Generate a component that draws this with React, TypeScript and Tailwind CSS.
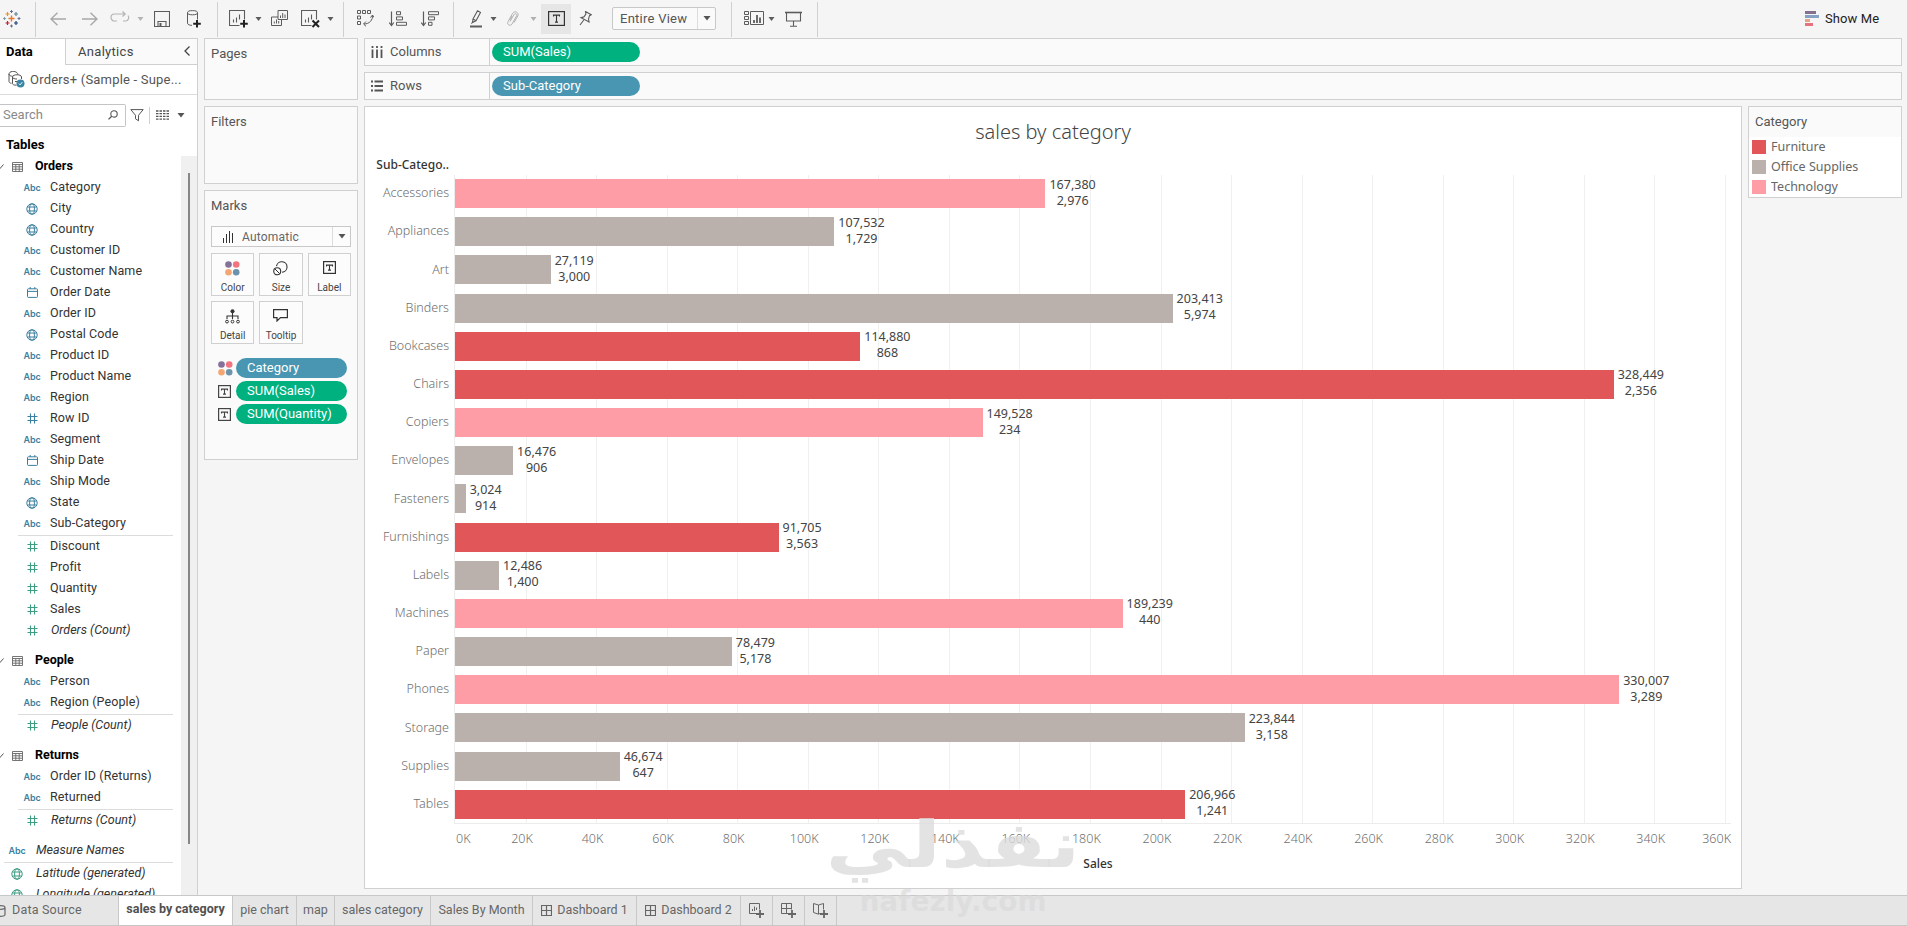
import type { ReactNode } from 'react';

type IconKind = 'abc' | 'globe' | 'date' | 'num';
type Field = { name: string; icon: IconKind; measure?: boolean; italic?: boolean };
type Table = { title: string; dimensions: Field[]; measures: Field[] };

// Data pane
const tables: Table[] = [
  {
    title: 'Orders',
    dimensions: [
      { name: 'Category', icon: 'abc' },
      { name: 'City', icon: 'globe' },
      { name: 'Country', icon: 'globe' },
      { name: 'Customer ID', icon: 'abc' },
      { name: 'Customer Name', icon: 'abc' },
      { name: 'Order Date', icon: 'date' },
      { name: 'Order ID', icon: 'abc' },
      { name: 'Postal Code', icon: 'globe' },
      { name: 'Product ID', icon: 'abc' },
      { name: 'Product Name', icon: 'abc' },
      { name: 'Region', icon: 'abc' },
      { name: 'Row ID', icon: 'num' },
      { name: 'Segment', icon: 'abc' },
      { name: 'Ship Date', icon: 'date' },
      { name: 'Ship Mode', icon: 'abc' },
      { name: 'State', icon: 'globe' },
      { name: 'Sub-Category', icon: 'abc' },
    ],
    measures: [
      { name: 'Discount', icon: 'num', measure: true },
      { name: 'Profit', icon: 'num', measure: true },
      { name: 'Quantity', icon: 'num', measure: true },
      { name: 'Sales', icon: 'num', measure: true },
      { name: 'Orders (Count)', icon: 'num', measure: true, italic: true },
    ],
  },
  {
    title: 'People',
    dimensions: [
      { name: 'Person', icon: 'abc' },
      { name: 'Region (People)', icon: 'abc' },
    ],
    measures: [{ name: 'People (Count)', icon: 'num', measure: true, italic: true }],
  },
  {
    title: 'Returns',
    dimensions: [
      { name: 'Order ID (Returns)', icon: 'abc' },
      { name: 'Returned', icon: 'abc' },
    ],
    measures: [{ name: 'Returns (Count)', icon: 'num', measure: true, italic: true }],
  },
];

// Chart data
const colors = {
  furniture: 'bg-[#e15759]',
  office: 'bg-[#bab0ac]',
  technology: 'bg-[#ff9da7]',
};

const AXIS_MAX = 361700;

const rows: { name: string; sales: number; quantity: number; group: keyof typeof colors }[] = [
  { name: 'Accessories', sales: 167380, quantity: 2976, group: 'technology' },
  { name: 'Appliances', sales: 107532, quantity: 1729, group: 'office' },
  { name: 'Art', sales: 27119, quantity: 3000, group: 'office' },
  { name: 'Binders', sales: 203413, quantity: 5974, group: 'office' },
  { name: 'Bookcases', sales: 114880, quantity: 868, group: 'furniture' },
  { name: 'Chairs', sales: 328449, quantity: 2356, group: 'furniture' },
  { name: 'Copiers', sales: 149528, quantity: 234, group: 'technology' },
  { name: 'Envelopes', sales: 16476, quantity: 906, group: 'office' },
  { name: 'Fasteners', sales: 3024, quantity: 914, group: 'office' },
  { name: 'Furnishings', sales: 91705, quantity: 3563, group: 'furniture' },
  { name: 'Labels', sales: 12486, quantity: 1400, group: 'office' },
  { name: 'Machines', sales: 189239, quantity: 440, group: 'technology' },
  { name: 'Paper', sales: 78479, quantity: 5178, group: 'office' },
  { name: 'Phones', sales: 330007, quantity: 3289, group: 'technology' },
  { name: 'Storage', sales: 223844, quantity: 3158, group: 'office' },
  { name: 'Supplies', sales: 46674, quantity: 647, group: 'office' },
  { name: 'Tables', sales: 206966, quantity: 1241, group: 'furniture' },
];

const ticks = Array.from({ length: 19 }, (_, i) => i * 20);

const legend = [
  { label: 'Furniture', color: colors.furniture },
  { label: 'Office Supplies', color: colors.office },
  { label: 'Technology', color: colors.technology },
];

// Icons
const Svg = ({
  w,
  h,
  className = '',
  children,
}: {
  w: number;
  h: number;
  className?: string;
  children: ReactNode;
}) => (
  <svg
    width={w}
    height={h}
    viewBox={`0 0 ${w} ${h}`}
    fill="none"
    stroke="currentColor"
    className={`shrink-0 ${className}`}
  >
    {children}
  </svg>
);

const Caret = ({ className = '' }: { className?: string }) => (
  <Svg w={7} h={4} className={className}>
    <path d="M0.5 0h6L3.5 4z" fill="currentColor" stroke="none" />
  </Svg>
);

const BigCaret = () => (
  <Svg w={8} h={5} className="text-[#555]">
    <path d="M0.5 0h7L4 4.5z" fill="currentColor" stroke="none" />
  </Svg>
);

const Divider = ({ className }: { className: string }) => (
  <div className={`mt-px h-[35px] w-px shrink-0 bg-[#d0d0d0] ${className}`} />
);

const TableauLogo = () => (
  <Svg w={18} h={18} className="ml-[3px]">
    <path d="M8.5 5.5v6M5.5 8.5h6" stroke="#e8762c" strokeWidth="1.4" />
    <path d="M4.5 2v4M2.5 4h4" stroke="#eb9129" strokeWidth="1.2" />
    <path d="M13 2v4M11 4h4" stroke="#59879b" strokeWidth="1.2" />
    <path d="M4.5 11v4M2.5 13h4" stroke="#c72035" strokeWidth="1.2" />
    <path d="M13 11v4M11 13h4" stroke="#1f447e" strokeWidth="1.2" />
    <path d="M8.5 0v3M7 1.5h3" stroke="#5b6591" strokeWidth="0.9" />
    <path d="M8.5 14.5v3M7 16h3" stroke="#5b6591" strokeWidth="0.9" />
    <path d="M1.5 7v3M0 8.5h3" stroke="#7199a6" strokeWidth="0.9" />
    <path d="M16 7v3M14.5 8.5h3" stroke="#5b6591" strokeWidth="0.9" />
  </Svg>
);

const LabelIcon = ({ w, h, className = '' }: { w: number; h: number; className?: string }) => (
  <Svg w={w} h={h} className={className}>
    <rect x="0.6" y="0.6" width={w - 1.2} height={h - 1.2} strokeWidth="1.2" />
    <path
      d={`M${w / 2 - 3} 5.6V4.1h6v1.5M${w / 2} 4.1v${h - 8}M${w / 2 - 1.5} ${h - 3.9}h3`}
      strokeWidth="1.1"
    />
  </Svg>
);

const ColorDots = () => (
  <Svg w={15} h={15}>
    <g stroke="none">
      <circle cx="3.5" cy="3.5" r="3.3" fill="#85709a" />
      <circle cx="11.2" cy="3.5" r="3.3" fill="#f2747e" />
      <circle cx="3.5" cy="11.3" r="3.3" fill="#f3a671" />
      <circle cx="11.2" cy="11.3" r="3.3" fill="#6c93ab" />
    </g>
  </Svg>
);

const FieldIcon = ({ kind, measure }: { kind: IconKind; measure?: boolean }) => {
  const tint = measure ? 'text-[#3d9c82]' : 'text-[#3b7f9f]';
  if (kind === 'abc') {
    return (
      <span className={`pt-px font-['Inter'] text-[9px] font-semibold tracking-[-0.1px] ${tint}`}>
        Abc
      </span>
    );
  }
  if (kind === 'globe') {
    return (
      <Svg w={12} h={12} className={tint}>
        <circle cx="6" cy="6" r="5.2" />
        <ellipse cx="6" cy="6" rx="2.4" ry="5.2" />
        <path d="M1.4 4h9.2M1.4 8h9.2" />
      </Svg>
    );
  }
  if (kind === 'date') {
    return (
      <Svg w={11} h={11} className={tint}>
        <rect x="0.5" y="1.8" width="10" height="8.6" rx="0.8" />
        <path d="M0.5 4.4h10M3.2 0v2M7.8 0v2" />
      </Svg>
    );
  }
  return (
    <Svg w={11} h={11} className={tint}>
      <path d="M3.5 0.5v10M7.5 0.5v10M0.5 3.5h10M0.5 7.5h10" strokeWidth="1.1" />
    </Svg>
  );
};

const TableIcon = () => (
  <Svg w={11} h={10} className="text-[#666]">
    <path d="M0.5 0.5h10v9h-10zM0.5 2.5h10M0.5 4.8h10M0.5 7.2h10M3.8 2.5v7M7.2 2.5v7" strokeWidth="0.9" />
  </Svg>
);

// Toolbar
const Toolbar = () => (
  <header className="flex h-[38px] shrink-0 items-center bg-[#f5f5f5] pb-px text-[#5c5c5c]">
    <TableauLogo />
    <Divider className="ml-[14px]" />
    <Svg w={16} h={14} className="ml-[14px] text-[#a8a8a8]">
      <path d="M16 7H1M7.5 0.7L1 7l6.5 6.3" strokeWidth="1.4" />
    </Svg>
    <Svg w={16} h={14} className="ml-4 text-[#a8a8a8]">
      <path d="M0 7h15M8.5 0.7L15 7l-6.500 6.300" strokeWidth="1.4" />
    </Svg>
    <Svg w={20} h={12} className="ml-3 -mt-1 text-[#b4b4b4]">
      <path d="M7 10H4.500a3.500 3.500 0 010-7H15M12.500 0.500L15.200 3l-2.700 2.500M13 10h2.500a3.400 3.400 0 002.500-5.500" strokeWidth="1.2" />
    </Svg>
    <Caret className="ml-[7px] text-[#b4b4b4]" />
    <Svg w={16} h={16} className="ml-[10px]">
      <path d="M0.500 0.500h15v15h-15zM4 15.500v-5h8v5" strokeWidth="1.100" />
      <path d="M5.500 12h2v3.500h-2z" fill="currentColor" stroke="none" />
    </Svg>
    <Svg w={15} h={18} className="ml-[17px]">
      <ellipse cx="5.500" cy="2.700" rx="5" ry="2.100" />
      <path d="M0.500 2.700v10.500c0 1.300 2 2.100 4.500 2.200M10.500 2.700v6.800" />
      <path d="M10 10v7.500M6.200 13.800h7.600" stroke="#222" strokeWidth="2" />
    </Svg>
    <Divider className="ml-[15px]" />
    <Svg w={19} h={18} className="ml-[11px]">
      <path d="M10.500 15.500H0.500v-15h15v9M4.500 12.500v-3M7.500 12.500v-5M10.500 9.500v-5" strokeWidth="1.100" />
      <path d="M15 10v7.500M11.200 13.800h7.600" stroke="#222" strokeWidth="2" />
    </Svg>
    <Caret className="ml-[7px]" />
    <Svg w={17} h={17} className="ml-[9px]">
      <path d="M7 0.500h9.500v9H7zM9.500 8V5.500M11.700 8V3M14 8V4.500" />
      <path d="M7 7H0.500v8.500h10V9.500M3.300 13.500v-2M5.500 13.500v-4M7.700 13.500v-2.500" />
    </Svg>
    <Svg w={19} h={18} className="ml-[13px]">
      <path d="M10.500 15.500H0.500v-15h15v9M4.500 12.500v-3M7.500 12.500v-5M10.500 9.500v-5" strokeWidth="1.100" />
      <path d="M11.500 10.500l6.500 6.500M18 10.500l-6.500 6.500" stroke="#222" strokeWidth="2" />
    </Svg>
    <Caret className="ml-[7px]" />
    <Divider className="ml-[9px]" />
    <Svg w={17} h={17} className="ml-[13px]">
      <path d="M0.500 0.500h3v3h-3zM5.500 0.500h3v3h-3zM10.500 0.500h3v3h-3zM0.500 6h3v3h-3zM0.500 11.500h3v3h-3zM15.500 5c0.500 5-3 9-8.500 9M13.500 7.500L15.500 5l1.500 2.500M9 11.500L6.500 14l2.500 2.300" />
    </Svg>
    <Svg w={18} h={16} className="ml-[15px]">
      <path d="M2.500 0.500v13M0.200 11.500l2.300 3 2.300-3" strokeWidth="1.200" />
      <path d="M7.500 0.700h4v3h-4zM7.500 5.900h6v3h-6zM7.500 11.300h10v3h-10z" />
    </Svg>
    <Svg w={18} h={16} className="ml-[14px]">
      <path d="M2.500 0.500v13M0.200 11.500l2.300 3 2.300-3" strokeWidth="1.200" />
      <path d="M7.500 0.700h10v3h-10zM7.500 5.900h6v3h-6zM7.500 11.300h3.500v3H7.500z" />
    </Svg>
    <Divider className="ml-[14px]" />
    <Svg w={12} h={18} className="ml-4">
      <path d="M3 9L7.500 0.800l3 1.700L6 10.800l-3.500 1.700zM3 9l3 1.800M1.500 13.800l1-1.500" strokeWidth="1.100" />
      <path d="M0 16.500h12" strokeWidth="2" />
    </Svg>
    <Caret className="ml-2" />
    <Svg w={13} h={16} className="ml-[9px] text-[#b0b0b0]">
      <path d="M4 10.500L8 3.500c1.200-1.800 3.500-0.500 2.500 1.500l-4.500 8c-1.500 2.500-5.500 0.800-4-2.200L6.500 2.500C8.500-1 13.500 1.500 11.800 5L8 11.500M6 5L3.800 9" />
    </Svg>
    <Caret className="ml-[11px] text-[#b0b0b0]" />
    <div className="ml-1 flex h-[30px] w-[30px] items-center justify-center bg-[#e6e6e6] text-[#333]">
      <LabelIcon w={17} h={15} />
    </div>
    <Svg w={13} h={15} className="ml-2">
      <path d="M6.500 0.600l5.700 3.200-1.700 0.900-1 3.300 0.600 3L2 6.700l2.900-0.800 2-2.700zM4.800 9L1 14" strokeWidth="1.100" />
    </Svg>
    <div className="ml-5 flex h-[23px] w-[104px] items-center rounded-xs border border-[#c8c8c8] bg-[#fafafa] text-[13px] text-[#555]">
      <span className="w-[84px] pl-[7px] tracking-[0.25px]">Entire View</span>
      <span className="flex h-full flex-1 items-center justify-center border-l border-[#dcdcdc]">
        <BigCaret />
      </span>
    </div>
    <Divider className="ml-[15px]" />
    <Svg w={20} h={15} className="ml-3">
      <path d="M0.500 0.500h4v3h-4zM0.500 5.500h4v3h-4zM0.500 10.500h4v3h-4zM6.500 0.500h13v13h-13z" />
      <path d="M10 12V9M13 12V4M16 12V6.500" strokeWidth="1.800" />
    </Svg>
    <Caret className="ml-1" />
    <Svg w={17} h={16} className="ml-[10px]">
      <path d="M0 1.500h17" strokeWidth="1.600" />
      <path d="M1.500 1.500v8.500h14V1.500M8.500 10v5M5 15.300h7" strokeWidth="1.100" />
    </Svg>
    <Divider className="ml-[15px]" />
    <Svg w={14} h={15} className="mr-[6px] ml-auto">
      <g stroke="none">
        <path d="M0 0h11v3H0z" fill="#84708f" />
        <path d="M0 4h14v3H0z" fill="#86a2c4" />
        <path d="M0 8h5v3H0z" fill="#e3a687" />
        <path d="M0 12h8v3H0z" fill="#e8717e" />
      </g>
    </Svg>
    <span className="w-[82px] text-[13px] tracking-[0.1px] text-[#222]">Show Me</span>
  </header>
);

// Left data pane
const FieldRow = ({ field, root = false }: { field: Field; root?: boolean }) => (
  <div className={`flex h-[21px] shrink-0 items-center ${root ? 'pl-1' : 'pl-[19px]'}`}>
    <span className="flex w-[26px] shrink-0 justify-center">
      <FieldIcon kind={field.icon} measure={field.measure} />
    </span>
    <span
      className={`whitespace-nowrap text-[#333] ${
        field.italic ? 'pl-[6px] italic' : 'pl-[5px] tracking-[0.1px]'
      }`}
    >
      {field.name}
    </span>
  </div>
);

const DataPane = () => (
  <aside className="flex w-[198px] shrink-0 flex-col border-r border-[#d0d0d0] bg-white">
    <div className="flex h-[27px] shrink-0 text-[13px]">
      <div className="w-[65px] border-t border-[#d0d0d0] pt-[3px] pl-[6px] font-bold text-black">
        Data
      </div>
      <div className="flex flex-1 justify-between border border-r-0 border-[#d0d0d0] bg-[#fafafa] pt-[3px] pr-[7px] pl-3 text-[#444]">
        <span className="tracking-[0.3px]">Analytics</span>
        <Svg w={6} h={10} className="mt-1">
          <path d="M5.500 0.500L1 5l4.500 4.500" strokeWidth="1.300" />
        </Svg>
      </div>
    </div>

    <div className="flex h-[30px] shrink-0 items-center border-b border-[#dcdcdc] pl-2 text-[#555]">
      <Svg w={17} h={17}>
        <path d="M1 3v7.500c0 1 1 1.600 2.500 1.800M10 3.500C9.500-0.500 1-0.500 1 3c0 1.500 2 2.200 3.500 2.200M4.500 6v6.500c0 1 1.500 1.700 4 1.700M4.500 6c0-3 9-3 9 0v2M4.500 6c0 1.500 2 2 4.500 2M7 10.500h2.500" />
        <circle cx="12.500" cy="12.500" r="4" fill="#3b86a5" stroke="none" />
        <path d="M10.800 12.500l1.300 1.400 2.200-2.700" stroke="#fff" strokeWidth="0.900" />
      </Svg>
      <span className="pl-[5px] text-[13px] tracking-[0.2px]">Orders+ (Sample - Supe...</span>
    </div>

    <div className="flex h-[40px] shrink-0 items-center">
      <div className="flex h-[23px] w-[126px] items-center justify-between rounded-r-xs border border-l-0 border-[#c4c4c4] pr-[7px] pl-[3px] text-[13px] text-[#8a8a8a]">
        Search
        <Svg w={10} h={10} className="text-[#555]">
          <circle cx="6" cy="3.900" r="3.200" strokeWidth="1.100" />
          <path d="M3.700 6.200L0.500 9.400" strokeWidth="1.300" />
        </Svg>
      </div>
      <Svg w={14} h={13} className="ml-1 text-[#555]">
        <path d="M0.800 0.600h12.400L8.500 6.300v5.500l-3-2V6.300z" />
      </Svg>
      <div className="ml-[5px] h-[17px] w-px bg-[#d0d0d0]" />
      <Svg w={13} h={10} className="ml-[6px] text-[#555]">
        <path d="M0 1h13M0 3.700h13M0 6.400h13M0 9.100h13" strokeWidth="1.300" strokeDasharray="2.500 1" />
      </Svg>
      <div className="ml-2">
        <BigCaret />
      </div>
    </div>

    <div className="h-[21px] shrink-0 pl-[6px] text-[13px] font-bold text-black">Tables</div>

    <div className="flex min-h-0 flex-1">
      <div className="flex w-[181px] flex-col overflow-hidden text-[12.500px]">
        {tables.map((table) => (
          <div key={table.title} className="mb-[9px] flex shrink-0 flex-col">
            <div className="flex h-[21px] items-center text-[12.500px] font-bold text-black">
              <Svg w={4} h={5} className="mr-2 text-[#555]">
                <path d="M-3 1.500L0 4.500l3.500-4" />
              </Svg>
              <TableIcon />
              <span className="pl-3">{table.title}</span>
            </div>
            {table.dimensions.map((field) => (
              <FieldRow key={field.name} field={field} />
            ))}
            <div className="ml-[18px] h-[2px] w-[155px] border-b border-[#dcdcdc]" />
            {table.measures.map((field) => (
              <FieldRow key={field.name} field={field} />
            ))}
          </div>
        ))}
        <FieldRow root field={{ name: 'Measure Names', icon: 'abc', italic: true }} />
        <div className="ml-1 h-[2px] w-[169px] shrink-0 border-b border-[#dcdcdc]" />
        <FieldRow
          root
          field={{ name: 'Latitude (generated)', icon: 'globe', measure: true, italic: true }}
        />
        <FieldRow
          root
          field={{ name: 'Longitude (generated)', icon: 'globe', measure: true, italic: true }}
        />
      </div>
      <div className="flex-1 bg-[#f0f0f0] pt-[17px] pl-[7px]">
        <div className="h-[671px] w-[2px] bg-[#878787]" />
      </div>
    </div>
  </aside>
);

// Shelves and marks card
const Pill = ({ blue = false, className, children }: { blue?: boolean; className: string; children: ReactNode }) => (
  <div
    className={`flex h-5 items-center rounded-full pl-[11px] text-[13px] whitespace-nowrap text-white ${
      blue ? 'bg-[#4996b2]' : 'bg-[#00b180]'
    } ${className}`}
  >
    {children}
  </div>
);

const MarkButton = ({ label, children }: { label: string; children: ReactNode }) => (
  <div className="flex h-[43px] flex-col items-center justify-between border border-[#d0d0d0] bg-[#fcfcfc] pt-[7px] pb-px text-[#333]">
    {children}
    <span className="text-[10px] leading-[13px] whitespace-nowrap text-[#444]">{label}</span>
  </div>
);

const Cards = () => (
  <div className="ml-[6px] flex w-[154px] shrink-0 flex-col gap-[6px] text-[13px] text-[#555]">
    <section className="h-[62px] border border-[#d0d0d0] bg-[#fafafa] pt-[5px] pl-[6px]">Pages</section>
    <section className="h-[78px] border border-[#d0d0d0] bg-[#fafafa] pt-[5px] pl-[6px]">
      Filters
    </section>
    <section className="h-[270px] border border-[#d0d0d0] bg-[#fafafa] px-[6px] pt-[5px]">
      <h2 className="h-[30px]">Marks</h2>
      <div className="flex h-[21px] items-center border border-[#c8c8c8] bg-[#fcfcfc] text-[12px]">
        <Svg w={11} h={12} className="ml-[11px] text-[#333]">
          <path d="M0.500 12V7M3.500 12V3M6.500 12V0M9.500 12V2" />
        </Svg>
        <span className="flex-1 pl-2 tracking-[0.200px] text-[#666]">Automatic</span>
        <span className="flex h-full w-[18px] items-center justify-center border-l border-[#dcdcdc]">
          <BigCaret />
        </span>
      </div>
      <div className="mt-[6px] grid grid-cols-3 gap-x-[5px] gap-y-[5px]">
        <MarkButton label="Color">
          <ColorDots />
        </MarkButton>
        <MarkButton label="Size">
          <Svg w={15} h={15}>
            <path d="M3.500 5.200A5.300 5.300 0 119 11.300" strokeWidth="1.100" />
            <circle cx="4.200" cy="10.300" r="3.500" strokeWidth="1.100" />
            <path d="M2 8l4.500 4.500" />
          </Svg>
        </MarkButton>
        <MarkButton label="Label">
          <LabelIcon w={13} h={13} />
        </MarkButton>
        <MarkButton label="Detail">
          <Svg w={15} h={15}>
            <circle cx="7.500" cy="2.200" r="2" fill="currentColor" stroke="none" />
            <path d="M7.500 3v7M2 10V7h11v3" strokeWidth="1.100" />
            <circle cx="2" cy="12.600" r="1.400" />
            <circle cx="7.500" cy="12.600" r="1.400" />
            <circle cx="13" cy="12.600" r="1.400" />
          </Svg>
        </MarkButton>
        <MarkButton label="Tooltip">
          <Svg w={15} h={13}>
            <path d="M0.600 0.600h13.800v8H7.500L4 12V8.600H0.600z" strokeWidth="1.200" />
          </Svg>
        </MarkButton>
      </div>
      <div className="mt-[14px] flex flex-col gap-[3px] pl-[7px] text-[#444]">
        <div className="flex items-center gap-[3px]">
          <ColorDots />
          <Pill blue className="w-[111px]">Category</Pill>
        </div>
        <div className="flex items-center gap-[5px]">
          <LabelIcon w={13} h={13} />
          <Pill className="w-[111px]">SUM(Sales)</Pill>
        </div>
        <div className="flex items-center gap-[5px]">
          <LabelIcon w={13} h={13} />
          <Pill className="w-[111px]">SUM(Quantity)</Pill>
        </div>
      </div>
    </section>
  </div>
);

const Shelf = ({ icon, label, children }: { icon: ReactNode; label: string; children: ReactNode }) => (
  <div className="flex h-7 shrink-0 items-center border border-[#d0d0d0] bg-[#fafafa] text-[13px] text-[#555]">
    <div className="flex h-full w-[125px] items-center gap-[7px] border-r border-[#d0d0d0] pl-[6px]">
      {icon}
      {label}
    </div>
    <div className="pl-[2px]">{children}</div>
  </div>
);

// Bar chart
const Chart = () => (
  <section className="flex w-[1378px] shrink-0 flex-col border border-[#d0d0d0] bg-white font-['Noto_Sans',sans-serif] text-[12.500px]">
    <h1 className="h-[50px] pt-[11px] text-center text-[20px] leading-7 font-light text-[#444]">
      sales by category
    </h1>
    <div className="h-[17.500px] w-[84px] text-right text-[12px] leading-4 font-medium text-[#333]">
      Sub-Catego..
    </div>

    <div className="relative h-[649px]">
      <div className="absolute inset-y-0 left-[89px] w-[1277px] border-b border-l border-[#ececec]">
        {ticks.slice(1).map((tick) => (
          <span
            key={tick}
            className="absolute inset-y-0 w-px bg-[#f0f0f0]"
            style={{ left: `${((tick * 1000) / AXIS_MAX) * 100}%` }}
          />
        ))}
      </div>
      <div className="relative flex h-full flex-col">
        {rows.map((row) => (
          <div key={row.name} className="flex flex-1 items-center">
            <span className="w-[90px] pr-[6px] text-right font-light text-[#6e6e6e]">{row.name}</span>
            <div className="flex w-[1276px] items-center">
              <div
                className={`h-[29px] shrink-0 ${colors[row.group]}`}
                style={{ width: `${(row.sales / AXIS_MAX) * 100}%` }}
              />
              <div className="-mt-[2px] pl-1 text-center leading-4 text-[#444]">
                {row.sales.toLocaleString('en-US')}
                <br />
                {row.quantity.toLocaleString('en-US')}
              </div>
            </div>
          </div>
        ))}
      </div>
    </div>

    {/* axis */}
    <div className="flex h-8 items-center justify-between pr-[10px] pl-[91px] font-light text-[#6e6e6e]">
      <span>0K</span>
      <div className="flex">
        {ticks.slice(1, -1).map((tick) => (
          <span key={tick} className="w-[70.550px] text-center">
            {tick}K
          </span>
        ))}
      </div>
      <span>360K</span>
    </div>
    <div className="pl-[90px] text-center text-[12px] leading-4 font-medium text-[#333]">Sales</div>
  </section>
);

const Legend = () => (
  <section className="h-[92px] w-[154px] border border-[#d0d0d0] bg-white text-[#555]">
    <h2 className="h-[30px] bg-[#fafafa] pt-[5px] pl-[6px] text-[13px]">Category</h2>
    <ul className="pl-[3px] font-['Noto_Sans',sans-serif] text-[12.500px]">
      {legend.map((item) => (
        <li key={item.label} className="flex h-5 items-center gap-[5px] leading-5 text-[#666]">
          <span className={`h-[14px] w-[14px] ${item.color}`} />
          {item.label}
        </li>
      ))}
    </ul>
  </section>
);

// Sheet tabs
const DashboardIcon = () => (
  <Svg w={11} h={11} className="mr-[5px]">
    <path d="M0.500 0.500h10v10h-10zM5.500 0.500v10M0.500 5.500h10" strokeWidth="1.200" />
  </Svg>
);

const tabs = [
  { label: 'pie chart', width: 'w-[64px]' },
  { label: 'map', width: 'w-[38px]' },
  { label: 'sales category', width: 'w-[96px]' },
  { label: 'Sales By Month', width: 'w-[102px]' },
  { label: 'Dashboard 1', width: 'w-[104px]', dashboard: true },
  { label: 'Dashboard 2', width: 'w-[104px]', dashboard: true },
];

const SheetTabs = () => (
  <footer className="flex h-[31px] shrink-0 border-y border-[#c8c8c8] bg-[#e6e6e6] text-[12.500px] whitespace-nowrap text-[#666]">
    <div className="flex w-[119px] items-center border-r border-[#c8c8c8]">
      <Svg w={6} h={12} className="mr-[6px]">
        <path d="M-5 2.500c0-2.500 10-2.500 10 0v7c0 2.500-10 2.500-10 0M5 2.500c0 2-5 2-6 1.500" strokeWidth="1.200" />
      </Svg>
      <span className="tracking-[0.200px]">Data Source</span>
    </div>
    <div className="flex w-[114px] items-center justify-center border-r border-[#c8c8c8] bg-white pb-[2px] font-bold text-[#505050]">
      sales by category
    </div>
    {tabs.map((tab) => (
      <div
        key={tab.label}
        className={`flex items-center justify-center border-r border-[#c8c8c8] ${tab.width}`}
      >
        {tab.dashboard && <DashboardIcon />}
        {tab.label}
      </div>
    ))}
    <div className="flex w-8 items-center justify-center border-r border-[#c8c8c8]">
      <Svg w={15} h={15}>
        <path d="M7 10.500H0.500v-10h10v6M3.500 8V6M5.500 8V3.500M7.500 7V4.500" />
        <path d="M11 7v8M7 11h8" strokeWidth="1.800" />
      </Svg>
    </div>
    <div className="flex w-8 items-center justify-center border-r border-[#c8c8c8]">
      <Svg w={15} h={15}>
        <path d="M7 10.500H0.500v-10h10v6M5.500 0.500v10M0.500 5.500h10" />
        <path d="M11 7v8M7 11h8" strokeWidth="1.800" />
      </Svg>
    </div>
    <div className="flex w-8 items-center justify-center border-r border-[#c8c8c8]">
      <Svg w={15} h={15}>
        <path d="M5.500 2L0.500 0.500v9l5 1.700 1.500-0.700M5.500 2v9M5.500 2l5-1.500v6" />
        <path d="M11 7v8M7 11h8" strokeWidth="1.800" />
      </Svg>
    </div>
  </footer>
);

const Watermark = () => (
  <div className="pointer-events-none absolute top-[806px] left-[846px] flex w-[214px] flex-col items-center font-['DejaVu_Sans',sans-serif] font-bold whitespace-nowrap text-[#dcdcdc]/80">
    <span dir="rtl" className="h-[78px] origin-center scale-x-[1.300] text-[64px] leading-[78px]">
      نفذلي
    </span>
    <span className="text-[28px] leading-[36px] text-[#d8d8d8]/60">nafezly.com</span>
  </div>
);

export default function App() {
  return (
    <div className="relative flex h-[926px] w-[1907px] flex-col overflow-hidden bg-[#f5f5f5] font-['Roboto',sans-serif]">
      <Toolbar />
      <main className="flex min-h-0 flex-1">
        <DataPane />
        <Cards />
        <div className="mr-[5px] ml-[6px] flex flex-1 flex-col gap-[6px] pb-[6px]">
          <Shelf
            label="Columns"
            icon={
              <Svg w={12} h={12}>
                <path d="M1.500 0v2M1.500 3.500V12M6 0v2M6 3.500V12M10.500 0v2M10.500 3.500V12" strokeWidth="1.800" />
              </Svg>
            }
          >
            <Pill className="w-[148px]">SUM(Sales)</Pill>
          </Shelf>
          <Shelf
            label="Rows"
            icon={
              <Svg w={12} h={12}>
                <path d="M0 1.500h2M3.500 1.500H12M0 6h2M3.500 6H12M0 10.500h2M3.500 10.500H12" strokeWidth="1.800" />
              </Svg>
            }
          >
            <Pill blue className="w-[148px]">Sub-Category</Pill>
          </Shelf>
          <div className="flex min-h-0 flex-1 gap-[6px]">
            <Chart />
            <Legend />
          </div>
        </div>
      </main>
      <SheetTabs />
      <Watermark />
    </div>
  );
}
